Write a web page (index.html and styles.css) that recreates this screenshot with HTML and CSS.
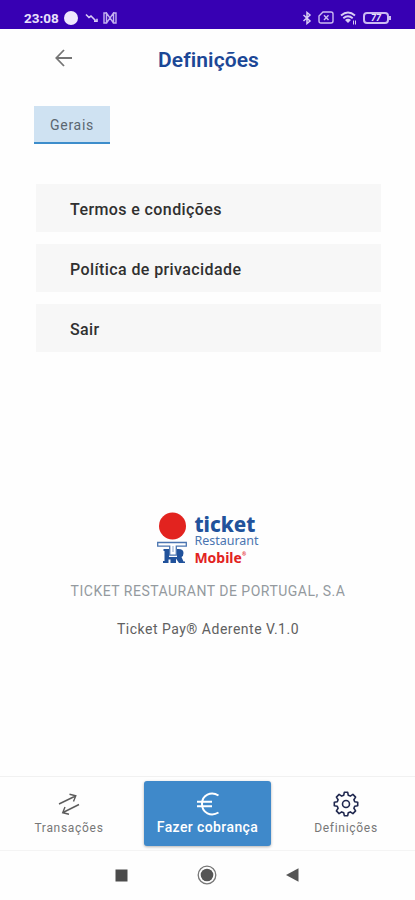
FILE: index.html
```html
<!DOCTYPE html>
<html lang="pt">

<head>
  <meta charset="UTF-8">
  <meta name="viewport" content="width=device-width, initial-scale=1.0">
  <title>Definições</title>
  <link rel="stylesheet" href="styles.css">
</head>

<body>
  <!-- Status bar -->
  <div class="status-bar">
    <div class="status-left">
      <span class="clock">23:08</span>
      <span class="dot"></span>
      <svg class="icon-trend" width="13" height="10" viewBox="0 0 13 10" fill="none" stroke="#d9ccf5" stroke-width="1.6">
        <path d="M1 1.500l3 3 2-1.500 4.500 4.500M9 8.300h3v-2.500" />
      </svg>
      <svg width="14" height="12" viewBox="0 0 14 12" fill="none" stroke="#c4b0f0" stroke-width="1.4">
        <path d="M3.500 1H1v10h2.500V1l3.500 5-3.500 5M10.500 1H13v10h-2.500V1L7 6l3.500 5" />
      </svg>
    </div>
    <div class="status-right">
      <svg width="10" height="14" viewBox="0 0 10 14" fill="none" stroke="#d9ccf5" stroke-width="1.5">
        <path d="M1.500 4l6.500 6-3 2.500v-11L8 4l-6.500 6" />
      </svg>
      <svg width="16" height="13" viewBox="0 0 16 13" fill="none" stroke="#cbbaf2" stroke-width="1.4">
        <path d="M5 1h8q2 0 2 2v7q0 2-2 2H3q-2 0-2-2V5z" />
        <path d="M6 4.200l4.500 4.800M10.500 4.200L6 9" />
      </svg>
      <svg width="17" height="14" viewBox="0 0 17 14" fill="none" stroke="#d9ccf5" stroke-width="1.9">
        <path d="M1 4.500q7-6 14 0M3.300 7.200q4.700-4 9.400 0" />
        <path d="M5 9q3-2.500 6 0l-3 3z" fill="#d9ccf5" stroke="none" />
        <path d="M13.500 9.500v4M15.500 9.500v4" stroke-width="1" />
      </svg>
      <div class="battery"><span class="battery-level">77</span></div>
    </div>
  </div>

  <!-- Page header -->
  <header class="header">
    <svg class="back" width="18" height="18" viewBox="0 0 18 18" fill="none" stroke="#757575" stroke-width="1.8">
      <path d="M17 9H1.500M9 1L1.300 9 9 17" />
    </svg>
    <h1 class="title">Definições</h1>
  </header>

  <main class="content">
    <div class="tab active">Gerais</div>

    <ul class="options">
      <li class="option">Termos e condições</li>
      <li class="option">Política de privacidade</li>
      <li class="option">Sair</li>
    </ul>

    <!-- Brand and version -->
    <div class="about">
      <div class="logo">
        <svg width="30" height="52" viewBox="0 0 30 52">
          <circle cx="15.500" cy="14" r="13.500" fill="#e2231f" />
          <path d="M6.500 37H12v8h8v-8h1.500q5 0 5 4 0 3-2 4l2 4.500H28V51h-6l-3-4.500V51h-5.500v-3.500h-2V51H6v-2h1.500V39h-1z" fill="#21529b" />
          <path d="M.7 30.500h28.600v3.700h-10v9h-6.600v-9H.7z" fill="#fff" stroke="#4a74b0" stroke-width="1.3" />
          <path d="M16 34v6" stroke="#8ba6cd" stroke-width="1" />
        </svg>
        <div class="logo-text">
          <span class="logo-ticket">ticket</span>
          <span class="logo-restaurant">Restaurant</span>
          <span class="logo-mobile">Mobile<small>®</small></span>
        </div>
      </div>
      <p class="company">TICKET RESTAURANT DE PORTUGAL, S.A</p>
      <p class="version">Ticket Pay® Aderente V.1.0</p>
    </div>
  </main>

  <!-- Bottom navigation -->
  <nav class="bottom-nav">
    <div class="nav-item">
      <svg width="22" height="24" viewBox="0 0 22 24" fill="none" stroke="#5c5c5c" stroke-width="1.4">
        <path d="M1 12L17.500 4M11.500 2.300l6.300 1.500-2.300 5.700M21 12.500L5 20.500M7 15l-2.300 5.700 6.300 1.500" />
      </svg>
      <span class="nav-label">Transações</span>
    </div>
    <div class="charge">
      <svg width="24" height="24" viewBox="0 0 24 24" fill="none" stroke="#fff" stroke-width="2">
        <path d="M22.500 3.500C15-1 6 3 6 12s9 13 16.500 8.500M1 9.700h15M1 14.200h15" />
      </svg>
      <span class="charge-label">Fazer cobrança</span>
    </div>
    <div class="nav-item">
      <svg width="26" height="26" viewBox="0 0 26 26" fill="none" stroke="#20284f" stroke-width="1.6" stroke-linejoin="round">
        <path d="M11.300 1.300h3.400l.6 3 2 .8 2.600-1.700 2.700 2.700-1.700 2.600.8 2 3 .6v3.400l-3 .6-.8 2 1.700 2.600-2.700 2.700-2.600-1.700-2 .8-.6 3h-3.400l-.6-3-2-.8-2.600 1.700-2.700-2.700 1.700-2.600-.8-2-3-.6v-3.400l3-.6.8-2-1.700-2.600 2.700-2.700 2.600 1.700 2-.8z" />
        <circle cx="13" cy="13" r="3.500" />
      </svg>
      <span class="nav-label">Definições</span>
    </div>
  </nav>

  <!-- Android system buttons -->
  <div class="system-bar">
    <svg width="13" height="13" viewBox="0 0 13 13">
      <path d="M.5.500h12v12H.5z" fill="#4b4b4b" />
    </svg>
    <svg width="20" height="20" viewBox="0 0 20 20">
      <circle cx="10" cy="10" r="8.800" fill="none" stroke="#777" stroke-width="1.3" />
      <circle cx="10" cy="10" r="6.300" fill="#555" />
    </svg>
    <svg width="13" height="14" viewBox="0 0 13 14">
      <path d="M0 7L12.500.300v13.400z" fill="#555" />
    </svg>
  </div>
</body>

</html>
```

FILE: styles.css
```css
/* Reset some default styles */
* {
  box-sizing: border-box;
}

body {
  margin: 0;
  height: 900px;
  display: flex;
  flex-direction: column;
  background-color: #fefefe;
  font-family: Roboto, sans-serif;
  overflow: hidden;
}

h1,
p,
ul {
  margin: 0;
  padding: 0;
}

svg {
  display: block;
  flex-shrink: 0;
}

/* Status bar */
.status-bar {
  height: 29px;
  padding: 6px 24px 0;
  display: flex;
  justify-content: space-between;
  align-items: center;
  background-color: #3700b3;
  color: #e9e0fb;
}

.status-left,
.status-right {
  display: flex;
  align-items: center;
}

.status-left {
  gap: 5px;
}

.status-right {
  gap: 6px;
}

.clock {
  width: 35px;
  font-size: 13.5px;
  font-weight: 700;
  white-space: nowrap;
}

.dot {
  width: 14px;
  height: 14px;
  border-radius: 50%;
  background-color: #efe6fd;
}

.icon-trend {
  margin-left: 2px;
}

.battery {
  display: flex;
  align-items: center;
}

.battery::after {
  content: "";
  width: 2px;
  height: 4px;
  background-color: #cbbaf2;
}

.battery-level {
  width: 26px;
  height: 12px;
  border: 2px solid #cbbaf2;
  border-radius: 4px;
  font-size: 9px;
  font-weight: 700;
  font-style: italic;
  line-height: 9px;
  text-align: center;
}

/* Header */
.header {
  height: 61px;
  display: grid;
  grid-template-columns: 56px 1fr 54px;
  align-items: center;
}

.back {
  grid-column: 1;
  justify-self: end;
  margin: 0 -17px 3px 0;
}

.title {
  text-align: center;
  font-size: 21px;
  font-weight: 600;
  letter-spacing: 0.1px;
  color: #1b4796;
}

/* Content */
.content {
  flex: 1;
  padding: 16px 34px 0 35px;
}

.tab {
  width: 76px;
  height: 38px;
  margin-left: -1px;
  line-height: 38px;
  text-align: center;
  font-size: 14px;
  letter-spacing: 0.7px;
  color: #5b6670;
}

.tab.active {
  background-color: #cfe2f2;
  border-bottom: 2px solid #3d8dcb;
}

.options {
  margin-top: 40px;
  display: flex;
  flex-direction: column;
  gap: 12px;
  list-style: none;
}

.option {
  height: 48px;
  margin-left: 1px;
  padding-left: 34px;
  line-height: 51px;
  background-color: #f7f7f7;
  font-size: 16px;
  font-weight: 500;
  letter-spacing: 0.4px;
  color: #303030;
}

.about {
  margin-top: 160px;
  display: flex;
  flex-direction: column;
  align-items: center;
}

/* Logo */
.logo {
  display: flex;
  gap: 7px;
  color: #21529b;
}

.logo-text {
  padding-top: 1px;
  display: flex;
  flex-direction: column;
  font-family: "Noto Sans", sans-serif;
}

.logo-ticket {
  height: 21px;
  font-size: 20.5px;
  font-weight: 800;
  line-height: 23px;
}

.logo-restaurant {
  height: 15px;
  font-size: 12.5px;
  line-height: 13px;
  color: #4a74b0;
}

.logo-mobile {
  display: flex;
  height: 15px;
  font-size: 14px;
  font-weight: 700;
  line-height: 17px;
  color: #e2231f;
}

.logo-mobile small {
  font-size: 5px;
  line-height: 10px;
}

.company {
  margin-top: 18px;
  font-size: 14px;
  letter-spacing: 0.5px;
  line-height: 18px;
  color: #949a9f;
}

.version {
  margin-top: 20px;
  font-size: 14px;
  letter-spacing: 0.5px;
  line-height: 18px;
  color: #606060;
}

/* Bottom navigation */
.bottom-nav {
  height: 75px;
  padding-top: 4px;
  display: grid;
  grid-template-columns: 138px 1fr 138px;
  border-top: 1px solid #f1f1f1;
  border-bottom: 1px solid #f4f4f4;
}

.nav-item {
  padding-top: 10px;
  display: flex;
  flex-direction: column;
  align-items: center;
}

.nav-item svg {
  height: 26px;
}

.nav-label {
  margin-top: 2px;
  font-size: 12px;
  letter-spacing: 0.7px;
  line-height: 18px;
  color: #777;
}

.charge {
  width: 127px;
  height: 65px;
  margin-left: 6px;
  padding-top: 11px;
  display: flex;
  flex-direction: column;
  align-items: center;
  border-radius: 3px;
  background-color: #3f89ca;
  box-shadow: 0 1px 3px rgba(0, 0, 0, 0.3);
  color: #fff;
}

.charge-label {
  margin-top: 2px;
  font-size: 14px;
  font-weight: 500;
  letter-spacing: 0.4px;
  line-height: 18px;
}

/* System buttons */
.system-bar {
  height: 49px;
  padding: 0 116px 1px 115px;
  display: flex;
  justify-content: space-between;
  align-items: center;
}
```
